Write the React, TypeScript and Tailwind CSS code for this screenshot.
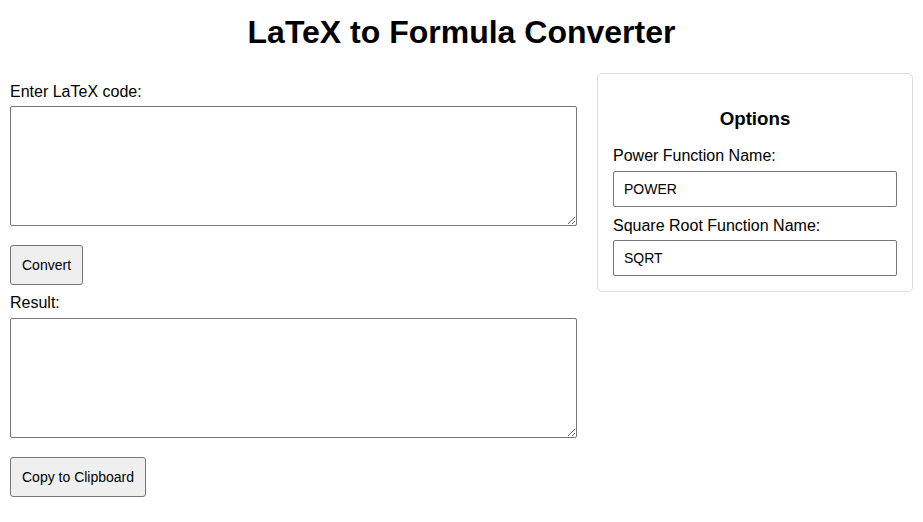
import React from "react";

export default function App() {
  const font = { fontFamily: '"Liberation Sans", Arial, sans-serif' };
  return (
    <div className="min-h-screen bg-white px-[10px] text-black" style={font}>
      <h1 className="pt-[14px] mb-[22px] text-center text-[32px] font-bold leading-[37px]">
        LaTeX to Formula Converter
      </h1>
      <div className="flex items-start gap-[20px]">
        <div className="w-[567px] pt-[10px]">
          <label className="block text-[16px] leading-[18px]">Enter LaTeX code:</label>
          <textarea className="mt-[5px] block h-[120px] w-[567px] rounded-[2px] border border-[#767676] bg-white outline-none" />
          <button className="mt-[19px] block h-[40px] rounded-[3px] border border-[#767676] bg-[#efefef] px-[11px] text-[14px] leading-[16px]">
            Convert
          </button>
          <label className="mt-[9px] block text-[16px] leading-[18px]">Result:</label>
          <textarea className="mt-[6px] block h-[120px] w-[567px] rounded-[2px] border border-[#767676] bg-white outline-none" readOnly />
          <button className="mt-[19px] block h-[40px] rounded-[3px] border border-[#767676] bg-[#efefef] px-[11px] text-[14px] leading-[16px]">
            Copy to Clipboard
          </button>
        </div>
        <div className="w-[316px] rounded-[5px] border border-[#dddddd] px-[15px] pb-[15px] pt-[15px]">
          <h3 className="mt-[19px] mb-[18px] text-center text-[18.72px] font-bold leading-[21px]">Options</h3>
          <label className="block text-[16px] leading-[18px]">Power Function Name:</label>
          <input
            className="mt-[6px] block h-[36px] w-full rounded-[2px] border border-[#767676] px-[10px] text-[14px] outline-none"
            defaultValue="POWER"
          />
          <label className="mt-[10px] block text-[16px] leading-[18px]">Square Root Function Name:</label>
          <input
            className="mt-[5px] block h-[36px] w-full rounded-[2px] border border-[#767676] px-[10px] text-[14px] outline-none"
            defaultValue="SQRT"
          />
        </div>
      </div>
    </div>
  );
}
